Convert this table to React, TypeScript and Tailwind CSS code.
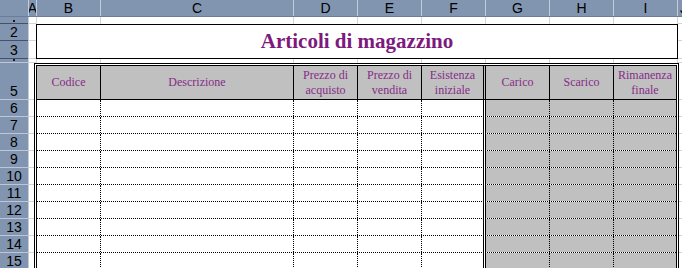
import React from 'react';

const colHeads = [
  { label: 'A', w: 'w-[8px]' },
  { label: 'B', w: 'w-[64px]' },
  { label: 'C', w: 'w-[193px]' },
  { label: 'D', w: 'w-[64px]' },
  { label: 'E', w: 'w-[64px]' },
  { label: 'F', w: 'w-[64px]' },
  { label: 'G', w: 'w-[64px]' },
  { label: 'H', w: 'w-[64px]' },
  { label: 'I', w: 'w-[64px]' },
];

const rowHeads = [
  { n: '', h: 'h-[7px]', mark: true, dark: true },
  { n: '2', h: 'h-[17px]', dark: true },
  { n: '3', h: 'h-[18px]', dark: true },
  { n: '', h: 'h-[4px]', mark: true },
  { n: '5', h: 'h-[37px]' },
  ...['6', '7', '8', '9', '10', '11', '12', '13', '14', '15'].map((n) => ({ n, h: 'h-[17px]' })),
];

// widths of B..I for the blank grid rows (1 and 4)
const gridCols = ['w-[64px]', 'w-[193px]', 'w-[64px]', 'w-[64px]', 'w-[64px]', 'w-[64px]', 'w-[64px]', 'w-[64px]'];

const dataRows = [6, 7, 8, 9, 10, 11, 12, 13, 14, 15];

function GridRow({ h }: { h: string }) {
  return (
    <div className={`flex ${h}`}>
      <div className="w-[8px] border-r border-b border-[#d4d4d4]" />
      {gridCols.map((w, i) => (
        <div key={i} className={`${w} border-r border-[#d4d4d4]`} />
      ))}
      <div className="flex-1 border-b border-[#d4d4d4]" />
    </div>
  );
}

function HeadCell({ w, text, last }: { w: string; text: string; last?: boolean }) {
  return (
    <div
      className={`${w} flex items-center justify-center px-[2px] text-center leading-[15px] ${
        last ? '' : 'border-r border-black'
      }`}
    >
      {text}
    </div>
  );
}

export default function App() {
  return (
    <div className="h-[268px] w-[682px] overflow-hidden bg-white font-['Liberation_Sans',Arial,sans-serif] text-black">
      {/* column letters */}
      <div className="flex h-[17px] border-b border-[#6c7d98] bg-[#8195b0] text-[14px] leading-[16px]">
        <div className="w-[29px] border-r border-[#c3ccd9]" />
        {colHeads.map((c) => (
          <div
            key={c.label}
            className={`${c.w} flex justify-center overflow-hidden border-r border-[#c3ccd9]`}
          >
            {c.label}
          </div>
        ))}
        <div className="flex-1 overflow-hidden pl-[2px]">J</div>
      </div>

      <div className="flex">
        {/* row numbers */}
        <div className="flex w-[29px] flex-col border-r border-[#c3ccd9] bg-[#8195b0] text-[14px] leading-[16px]">
          {rowHeads.map((r, i) => (
            <div
              key={i}
              className={`${r.h} flex items-end justify-center overflow-hidden border-b ${
                r.dark ? 'border-[#43526c]' : 'border-[#bcc6d5]'
              }`}
            >
              {r.mark ? <div className="mb-[1px] h-[2px] w-[2px] bg-[#1a1a1a]" /> : r.n}
            </div>
          ))}
        </div>

        {/* sheet */}
        <div className="flex flex-1 flex-col">
          <GridRow h="h-[7px]" />

          {/* title block, rows 2-3 */}
          <div className="flex h-[35px]">
            <div className="flex w-[7px] flex-col">
              <div className="h-[17px] border-b border-[#d4d4d4]" />
              <div className="flex-1 border-b border-[#d4d4d4]" />
            </div>
            <div className="flex w-[642px] items-center justify-center border border-black bg-white font-['Liberation_Serif',serif] text-[21px] font-bold text-[#7d1a7d]">
              Articoli di magazzino
            </div>
            <div className="flex flex-1 flex-col">
              <div className="h-[17px] border-b border-[#d4d4d4]" />
              <div className="flex-1 border-b border-[#d4d4d4]" />
            </div>
          </div>

          <GridRow h="h-[4px]" />

          {/* table */}
          <div className="flex">
            <div className="flex w-[5px] flex-col">
              <div className="h-[37px] border-b border-[#d4d4d4]" />
              {dataRows.map((r) => (
                <div key={r} className="h-[17px] border-b border-[#d4d4d4]" />
              ))}
            </div>

            <div className="w-[645px] border-[3px] border-double border-black font-['Liberation_Serif',serif] text-[12px] text-[#862c88]">
              <div className="flex h-[34px] border-b border-black bg-[#c0c0c0]">
                <HeadCell w="w-[64px]" text="Codice" />
                <HeadCell w="w-[193px]" text="Descrizione" />
                <HeadCell w="w-[64px]" text="Prezzo di acquisto" />
                <HeadCell w="w-[64px]" text="Prezzo di vendita" />
                <div className="flex w-[64px] items-center justify-center border-r-[3px] border-double border-black px-[2px] text-center leading-[15px]">
                  Esistenza iniziale
                </div>
                <HeadCell w="w-[64px]" text="Carico" />
                <HeadCell w="w-[64px]" text="Scarico" />
                <HeadCell w="flex-1" text="Rimanenza finale" last />
              </div>

              {dataRows.map((r) => (
                <div key={r} className="flex h-[17px] border-b border-dotted border-black">
                  <div className="w-[64px] border-r border-dotted border-black" />
                  <div className="w-[193px] border-r border-dotted border-black" />
                  <div className="w-[64px] border-r border-dotted border-black" />
                  <div className="w-[64px] border-r border-dotted border-black" />
                  <div className="w-[64px] border-r-[3px] border-double border-black" />
                  <div className="w-[64px] border-r border-dotted border-black bg-[#c0c0c0]" />
                  <div className="w-[64px] border-r border-dotted border-black bg-[#c0c0c0]" />
                  <div className="flex-1 bg-[#c0c0c0]" />
                </div>
              ))}
            </div>

            <div className="flex flex-1 flex-col">
              <div className="h-[37px] border-b border-[#d4d4d4]" />
              {dataRows.map((r) => (
                <div key={r} className="h-[17px] border-b border-[#d4d4d4]" />
              ))}
            </div>
          </div>
        </div>
      </div>
    </div>
  );
}
